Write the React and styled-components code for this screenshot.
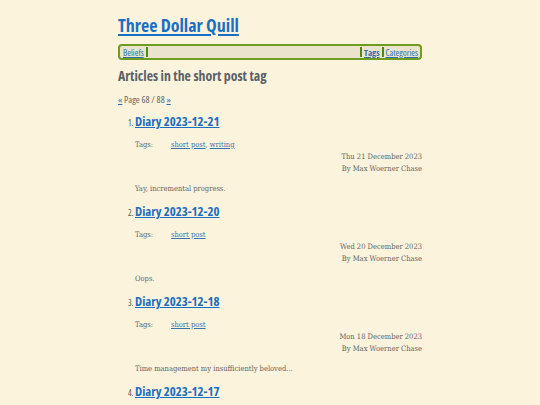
import React from "react";
import styled, { createGlobalStyle, css } from "styled-components";

const head = css`
  font-family: "Open Sans", Roboto, sans-serif;
  font-stretch: condensed;
`;

const Global = createGlobalStyle`
  html, body { margin: 0; padding: 0; background: #fbf3dc; }
  body { font-family: "DejaVu Serif Condensed", "DejaVu Serif", serif; color: #555; }
`;

const Page = styled.div`
  width: 304px;
  margin: 0 auto;
  padding: 14px 0 0 0;
`;

const Title = styled.a`
  display: inline-block;
  ${head}
  font-weight: 700;
  font-size: 18px;
  line-height: 22px;
  color: #1b6fc2;
  text-decoration: underline;
  text-decoration-thickness: 1.5px;
  text-underline-offset: 2px;
`;

const Nav = styled.nav`
  margin-top: 8px;
  display: flex;
  align-items: center;
  height: 12px;
  border: 2px solid #6e9c1e;
  border-radius: 4px;
  background: #ebe3cb;
  padding: 0 1px 0 2px;
  ${head}
  font-size: 9px;
`;

const NavLink = styled.a`
  color: #2f6fb0;
  text-decoration: underline;
  font-weight: ${(p) => (p.$bold ? 700 : 400)};
  padding: 0 1px;
`;

const Sep = styled.span`
  width: 2px;
  height: 10px;
  background: #4f8a12;
  margin: 0 1px;
`;

const Spacer = styled.div`
  flex: 1;
`;

const Heading = styled.h2`
  margin: 7px 0 0;
  ${head}
  font-weight: 700;
  font-size: 13.8px;
  line-height: 18px;
  color: #5b6166;
`;

const Pager = styled.div`
  margin-top: 9px;
  ${head}
  font-size: 9.5px;
  line-height: 11px;
  color: #666;
  a { color: #2f6fb0; text-decoration: underline; }
`;

const List = styled.ol`
  margin: 7px 0 0;
  padding: 0 0 0 17px;
  font-size: 7.5px;
`;

const Item = styled.li`
  margin-bottom: 7px;
  &::marker {
    font-family: "Open Sans", Roboto, sans-serif;
    font-stretch: condensed;
    font-size: 8.5px;
    color: #555;
  }
`;

const PostTitle = styled.a`
  ${head}
  font-weight: 700;
  font-size: 12.8px;
  line-height: 18px;
  color: #1b6fc2;
  text-decoration: underline;
  text-decoration-thickness: 1.2px;
`;

const Tags = styled.div`
  display: flex;
  margin-top: 9px;
  line-height: 12px;
  color: #666;
`;

const TagLabel = styled.span`
  width: 36px;
`;

const TagLink = styled.a`
  color: #3a72b0;
  text-decoration: underline;
`;

const Meta = styled.div`
  text-align: right;
  line-height: 12px;
  color: #666;
`;

const Summary = styled.p`
  margin: 8px 0 0;
  line-height: 12px;
  color: #666;
`;

const posts = [
  { title: "Diary 2023-12-21", tags: ["short post", "writing"], date: "Thu 21 December 2023", summary: "Yay, incremental progress." },
  { title: "Diary 2023-12-20", tags: ["short post"], date: "Wed 20 December 2023", summary: "Oops." },
  { title: "Diary 2023-12-18", tags: ["short post"], date: "Mon 18 December 2023", summary: "Time management my insufficiently beloved..." },
  { title: "Diary 2023-12-17", tags: ["short post"], date: "Sun 17 December 2023", summary: "" },
];

export default function App() {
  return (
    <>
      <Global />
      <Page>
        <Title href="#">Three Dollar Quill</Title>
        <Nav>
          <NavLink href="#">Beliefs</NavLink>
          <Sep />
          <Spacer />
          <Sep />
          <NavLink href="#" $bold>Tags</NavLink>
          <Sep />
          <NavLink href="#">Categories</NavLink>
        </Nav>
        <Heading>Articles in the short post tag</Heading>
        <Pager>
          <a href="#">«</a> Page 68 / 88 <a href="#">»</a>
        </Pager>
        <List>
          {posts.map((p) => (
            <Item key={p.title}>
              <PostTitle href="#">{p.title}</PostTitle>
              <Tags>
                <TagLabel>Tags:</TagLabel>
                <span>
                  {p.tags.map((t, i) => (
                    <React.Fragment key={t}>
                      {i > 0 && ", "}
                      <TagLink href="#">{t}</TagLink>
                    </React.Fragment>
                  ))}
                </span>
              </Tags>
              <Meta>{p.date}</Meta>
              <Meta>By Max Woerner Chase</Meta>
              <Summary>{p.summary}</Summary>
            </Item>
          ))}
        </List>
      </Page>
    </>
  );
}
